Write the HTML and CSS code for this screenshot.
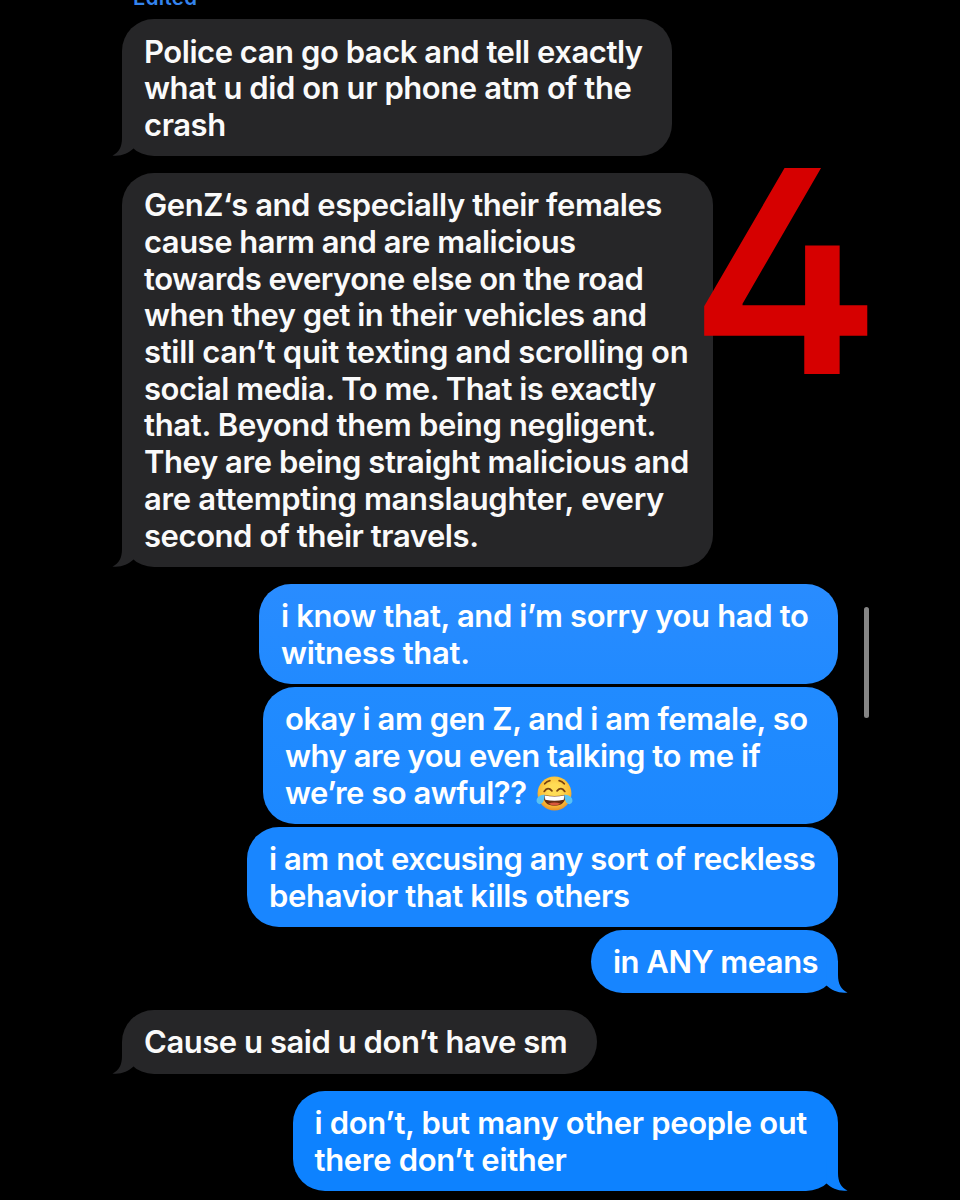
FILE: index.html
```html
<!DOCTYPE html>
<html lang="en">
<head>
<meta charset="utf-8">
<title>Messages</title>
<link rel="stylesheet" href="styles.css">
</head>
<body>
<svg class="defs" aria-hidden="true"><symbol id="tail" viewBox="0 0 32 32"><path d="M10 0V14C10 23 7 28.500 .5 31.500C9 32.500 16 29.500 21.500 24.500V0Z"/></symbol></svg>
<main class="chat">
  <div class="edited">Edited</div>
  <div class="bubble in b1">Police can go back and tell exactly<br><span class="snug">what u did on ur phone atm of the<br>crash</span><svg class="tail"><use href="#tail"/></svg></div>
  <div class="bubble in b2"><span class="snug">GenZ‘s and especially their females</span><br><span class="tight">cause harm and are malicious</span><br><span class="tight">towards everyone else on the road</span><br><span class="tight">when they get in their vehicles and</span><br><span class="loose">still can’t quit texting and scrolling on</span><br><span class="tight">social media. To me. That is exactly</span><br><span class="loose">that. Beyond them being negligent.</span><br><span class="snug">They are being straight malicious and</span><br><span class="loose">are attempting manslaughter, every</span><br><span class="snug">second of their travels.</span><svg class="tail"><use href="#tail"/></svg></div>
  <div class="bubble out b3"><span class="even">i know that, and i’m sorry you had to</span><br><span class="loose">witness that.</span></div>
  <div class="bubble out b4">okay i am gen Z, and i am female, so<br>why are you even talking to me if<br><span class="tight">we’re so awful??</span> <svg class="joy" viewBox="0 0 36 36" role="img" aria-label="Face with tears of joy"><defs><radialGradient id="face" cx=".5" cy=".4" r=".6"><stop offset=".3" stop-color="#ffdc55"/><stop offset=".75" stop-color="#fbbd35"/><stop offset="1" stop-color="#e6902b"/></radialGradient></defs><circle cx="18" cy="18" r="16.500" fill="url(#face)"/><path d="M8.500 8.500q2-2.500 5-3M22.500 5.500q3 .5 5 3M8 16q3.500-5 7.500-.5M20.500 15.500q4-4.500 7.500.5" fill="none" stroke="#79420f" stroke-width="1.700" stroke-linecap="round"/><path d="M7.500 19.500q10.500 2 21 0q.5 10.500-10.500 10.500T7.500 19.500Z" fill="#672d12"/><path d="M8.500 20q9.500 2 19 0l-.5 4q-9 2-18 0Z" fill="#fff"/><path d="M12 28q6-2.500 12 0q-6 3.500-12 0Z" fill="#d9573c"/><path d="M8.500 19Q0 20 .5 25.500Q1.500 29.500 5 28Q8.500 26 8.500 19ZM27.500 19q8.500 1 8 6.500q-1 4-4.500 2.500Q27.500 26 27.500 19Z" fill="#58c2f3"/></svg></div>
  <div class="bubble out b5">i am not excusing any sort of reckless<br><span class="loose">behavior that kills others</span></div>
  <div class="bubble out b6"><span class="tight">in ANY means</span><svg class="tail"><use href="#tail"/></svg></div>
  <div class="bubble in b7">Cause u said u don’t have sm<svg class="tail"><use href="#tail"/></svg></div>
  <div class="bubble out b8"><span class="loose">i don’t, but many other people out<br>there don’t either</span><svg class="tail"><use href="#tail"/></svg></div>
  <div class="scrollbar"></div>
  <div class="number">4</div>
</main>
</body>
</html>
```
FILE: styles.css
```css
* { box-sizing: border-box; }
body { margin: 0; background: #000; }
.defs { position: absolute; width: 0; height: 0; }
.chat {
  position: relative;
  width: 960px;
  height: 1200px;
  overflow: hidden;
  padding: 0 122px;
  display: flex;
  flex-direction: column;
  align-items: flex-start;
  font: 580 31px/36.700px Inter, "Liberation Sans", sans-serif;
  letter-spacing: -0.460px;
  color: #fff;
}
.tight { letter-spacing: -0.510px; }
.snug { letter-spacing: -0.430px; }
.even { letter-spacing: -0.360px; }
.loose { letter-spacing: -0.320px; }
.edited {
  height: 19px;
  margin-left: 11px;
  line-height: 27px;
  margin-top: -16px;
  margin-bottom: 16px;
  font-size: 20.500px;
  font-weight: 600;
  letter-spacing: 0.300px;
  color: #3484ee;
}
.bubble {
  position: relative;
  flex: none;
  padding: 14.500px 22px 12.600px;
  border-radius: 32px;
  white-space: nowrap;
}
.in { background: #262628; color: #fafafa; }
.out { align-self: flex-end; }
.tail { position: absolute; bottom: 0; width: 32px; height: 32px; }
.in .tail { left: -10px; fill: #262628; }
.out .tail { right: -10px; transform: scaleX(-1); }
.b1 { width: 550px; }
.b2 { width: 591px; margin-top: 16.500px; }
.b3 { width: 579px; margin-top: 17px; background: linear-gradient(#298cff, #218aff); }
.b4 { width: 575px; margin-top: 2.500px; background: linear-gradient(#218bff, #1c88ff); }
.b5 { width: 591px; margin-top: 2.500px; background: #1986ff; }
.b6 { width: 247px; margin-top: 2.500px; background: #1785ff; }
.b6 .tail { fill: #1785ff; }
.b7 { width: 475px; margin-top: 16.500px; }
.b8 { width: 545.500px; margin-top: 17px; background: #0d82ff; }
.b8 .tail { fill: #0d82ff; }
.joy { width: 37px; height: 37px; vertical-align: -5px; margin: -6px 0 -6px 2px; position: relative; top: -3px; }
.scrollbar {
  position: absolute;
  left: 864px;
  top: 607px;
  width: 5px;
  height: 111px;
  border-radius: 3px;
  background: #858585;
}
.number {
  position: absolute;
  left: 691px;
  top: 168px;
  font: 600 283px/206px Inter, sans-serif;
  letter-spacing: 0;
  font-feature-settings: "cv02" 1;
  transform: scaleX(1.02);
  color: #d60000;
}
```
